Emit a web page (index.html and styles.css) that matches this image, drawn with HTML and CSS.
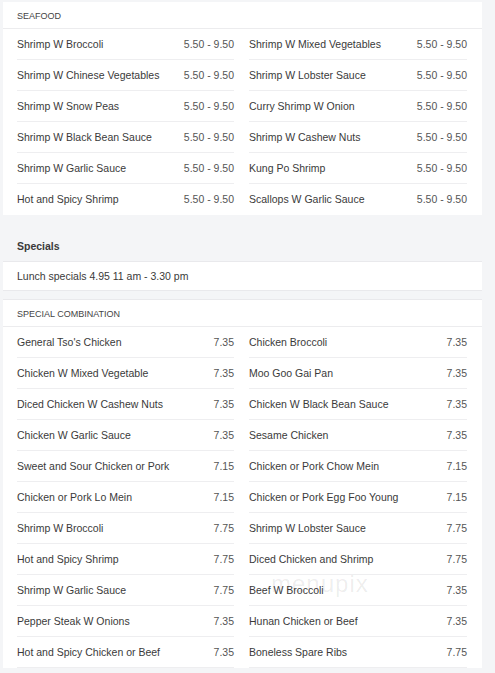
FILE: index.html
```html
<!DOCTYPE html>
<html>
<head>
<meta charset="utf-8">
<link rel="stylesheet" href="styles.css">
</head>
<body>
<div class="page">
  <section class="card">
    <div class="card-head">SEAFOOD</div>
    <div class="grid">
      <div class="row"><span>Shrimp W Broccoli</span><span class="price">5.50 - 9.50</span></div>
      <div class="row"><span>Shrimp W Mixed Vegetables</span><span class="price">5.50 - 9.50</span></div>
      <div class="row"><span>Shrimp W Chinese Vegetables</span><span class="price">5.50 - 9.50</span></div>
      <div class="row"><span>Shrimp W Lobster Sauce</span><span class="price">5.50 - 9.50</span></div>
      <div class="row"><span>Shrimp W Snow Peas</span><span class="price">5.50 - 9.50</span></div>
      <div class="row"><span>Curry Shrimp W Onion</span><span class="price">5.50 - 9.50</span></div>
      <div class="row"><span>Shrimp W Black Bean Sauce</span><span class="price">5.50 - 9.50</span></div>
      <div class="row"><span>Shrimp W Cashew Nuts</span><span class="price">5.50 - 9.50</span></div>
      <div class="row"><span>Shrimp W Garlic Sauce</span><span class="price">5.50 - 9.50</span></div>
      <div class="row"><span>Kung Po Shrimp</span><span class="price">5.50 - 9.50</span></div>
      <div class="row last"><span>Hot and Spicy Shrimp</span><span class="price">5.50 - 9.50</span></div>
      <div class="row last"><span>Scallops W Garlic Sauce</span><span class="price">5.50 - 9.50</span></div>
    </div>
  </section>

  <section class="specials">
    <div class="specials-title">Specials</div>
    <div class="specials-body">Lunch specials 4.95 11 am - 3.30 pm</div>
  </section>

  <section class="card">
    <div class="card-head">SPECIAL COMBINATION</div>
    <div class="grid">
      <div class="row"><span>General Tso's Chicken</span><span class="price">7.35</span></div>
      <div class="row"><span>Chicken Broccoli</span><span class="price">7.35</span></div>
      <div class="row"><span>Chicken W Mixed Vegetable</span><span class="price">7.35</span></div>
      <div class="row"><span>Moo Goo Gai Pan</span><span class="price">7.35</span></div>
      <div class="row"><span>Diced Chicken W Cashew Nuts</span><span class="price">7.35</span></div>
      <div class="row"><span>Chicken W Black Bean Sauce</span><span class="price">7.35</span></div>
      <div class="row"><span>Chicken W Garlic Sauce</span><span class="price">7.35</span></div>
      <div class="row"><span>Sesame Chicken</span><span class="price">7.35</span></div>
      <div class="row"><span>Sweet and Sour Chicken or Pork</span><span class="price">7.15</span></div>
      <div class="row"><span>Chicken or Pork Chow Mein</span><span class="price">7.15</span></div>
      <div class="row"><span>Chicken or Pork Lo Mein</span><span class="price">7.15</span></div>
      <div class="row"><span>Chicken or Pork Egg Foo Young</span><span class="price">7.15</span></div>
      <div class="row"><span>Shrimp W Broccoli</span><span class="price">7.75</span></div>
      <div class="row"><span>Shrimp W Lobster Sauce</span><span class="price">7.75</span></div>
      <div class="row"><span>Hot and Spicy Shrimp</span><span class="price">7.75</span></div>
      <div class="row"><span>Diced Chicken and Shrimp</span><span class="price">7.75</span></div>
      <div class="row"><span>Shrimp W Garlic Sauce</span><span class="price">7.75</span></div>
      <div class="row"><span>Beef W Broccoli</span><span class="price">7.35</span></div>
      <div class="row"><span>Pepper Steak W Onions</span><span class="price">7.35</span></div>
      <div class="row"><span>Hunan Chicken or Beef</span><span class="price">7.35</span></div>
      <div class="row"><span>Hot and Spicy Chicken or Beef</span><span class="price">7.35</span></div>
      <div class="row"><span>Boneless Spare Ribs</span><span class="price">7.75</span></div>
    </div>
    <div class="watermark">menupix</div>
  </section>
</div>
</body>
</html>
```

FILE: styles.css
```css
html, body {
  margin: 0;
  padding: 0;
  background: #f4f5f7;
  font-family: "Liberation Sans", Arial, sans-serif;
  color: #3c3c3c;
}

.page {
  width: 479px;
  margin-left: 3px;
  padding-top: 2px;
}

.card {
  position: relative;
  background: #ffffff;
  padding: 0 15px 0 14px;
}

.card-head {
  height: 23px;
  padding-top: 3px;
  line-height: 23px;
  font-size: 9px;
  color: #444;
  border-bottom: 1px solid #ececee;
  margin: 0 -15px 0 -14px;
  padding-left: 14px;
}

.grid {
  display: grid;
  grid-template-columns: 217px 218px;
  column-gap: 15px;
}

.row {
  display: flex;
  justify-content: space-between;
  align-items: center;
  height: 30px;
  border-bottom: 1px solid #eeeef0;
  font-size: 10.5px;
  color: #3a3a3a;
}

.row.last {
  border-bottom-color: transparent;
}

.price {
  color: #555;
}

.specials-title {
  height: 47px;
  box-sizing: border-box;
  padding: 25px 0 0 14px;
  font-size: 10.5px;
  font-weight: bold;
  color: #3a3a3a;
  border-bottom: 1px solid #e9e9ec;
}

.specials-body {
  background: #ffffff;
  height: 27px;
  padding-top: 1px;
  line-height: 27px;
  padding-left: 14px;
  font-size: 10.5px;
  color: #3a3a3a;
  border-bottom: 1px solid #e9e9ec;
  margin-bottom: 8px;
}

.specials + .card {
  border-top: 1px solid #e9e9ec;
}

.watermark {
  position: absolute;
  left: 268px;
  top: 270px;
  font-size: 24px;
  letter-spacing: 1px;
  color: rgba(0, 0, 0, 0.08);
  pointer-events: none;
}
```
